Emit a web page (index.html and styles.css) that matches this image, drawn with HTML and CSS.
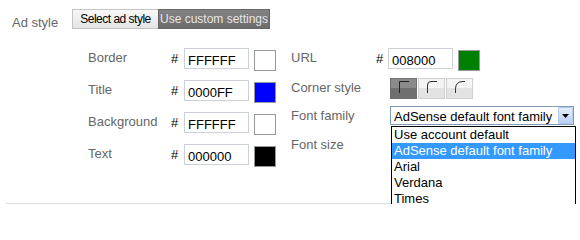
FILE: index.html
```html
<!DOCTYPE html>
<html>
<head>
<meta charset="utf-8">
<link rel="stylesheet" href="styles.css">
</head>
<body>
<div class="page">
  <div class="section">
    <div class="section-label">Ad style</div>
    <div class="section-body">
      <div class="tabs">
        <div class="tab tab-plain">Select ad style</div>
        <div class="tab tab-active">Use custom settings</div>
      </div>
      <div class="columns">
        <div class="col col-left">
          <div class="row"><span class="label">Border</span><span class="hash">#</span><input class="hex" type="text" value="FFFFFF"><span class="swatch" style="background:#FFFFFF"></span></div>
          <div class="row"><span class="label">Title</span><span class="hash">#</span><input class="hex" type="text" value="0000FF"><span class="swatch" style="background:#0000FF"></span></div>
          <div class="row"><span class="label">Background</span><span class="hash">#</span><input class="hex" type="text" value="FFFFFF"><span class="swatch" style="background:#FFFFFF"></span></div>
          <div class="row"><span class="label">Text</span><span class="hash">#</span><input class="hex" type="text" value="000000"><span class="swatch" style="background:#000000"></span></div>
        </div>
        <div class="col col-right">
          <div class="row"><span class="label label-r">URL</span><span class="hash hash-r">#</span><input class="hex" type="text" value="008000"><span class="swatch" style="background:#008000"></span></div>
          <div class="row"><span class="label label-wide">Corner style</span>
            <div class="corners">
              <div class="corner corner-on"><svg width="12" height="13" viewBox="0 0 12 13"><path d="M1.5 13 V1.5 H11" fill="none" stroke="#222" stroke-width="1"/></svg></div>
              <div class="corner"><svg width="12" height="13" viewBox="0 0 12 13"><path d="M1.5 13 V5 Q1.5 1.5 5 1.5 H11" fill="none" stroke="#333" stroke-width="1"/></svg></div>
              <div class="corner"><svg width="12" height="13" viewBox="0 0 12 13"><path d="M1.5 13 V9 Q1.5 1.5 9 1.5 H11" fill="none" stroke="#333" stroke-width="1"/></svg></div>
            </div>
          </div>
          <div class="row"><span class="label label-wide">Font family</span>
            <div class="select-wrap">
              <div class="select">
                <span class="select-text">AdSense default font family</span>
                <span class="select-arrow"><svg width="7" height="4" viewBox="0 0 7 4"><polygon points="0,0 7,0 3.5,4" fill="#000"/></svg></span>
              </div>
              <ul class="options">
                <li>Use account default</li>
                <li class="option-selected">AdSense default font family</li>
                <li>Arial</li>
                <li>Verdana</li>
                <li>Times</li>
              </ul>
            </div>
          </div>
          <div class="row"><span class="label label-wide">Font size</span></div>
        </div>
      </div>
    </div>
  </div>
  <div class="separator"></div>
</div>
</body>
</html>
```

FILE: styles.css
```css
* { box-sizing: border-box; }

body {
  margin: 0;
  font-family: "Liberation Sans", Arial, sans-serif;
  font-size: 13px;
  color: #000;
  background: #fff;
}

.page {
  padding: 9px 6px 0 6px;
}

.section {
  display: flex;
  padding-left: 6px;
}

.section-label {
  width: 62px;
  padding-top: 6px;
  line-height: 16px;
  color: #666;
}

.section-body {
  display: flex;
  flex-direction: column;
}

.tabs {
  display: flex;
  height: 20px;
}

.tab {
  height: 20px;
  padding-top: 1px;
  line-height: 17px;
  font-size: 12px;
  text-align: center;
  white-space: nowrap;
}

.tab-plain {
  width: 86px;
  border: 1px solid #c4c4c4;
  border-right: none;
  background: linear-gradient(#f8f8f8, #e4e4e4);
  color: #000;
  letter-spacing: -0.5px;
}

.tab-active {
  width: 112px;
  border: 1px solid #666;
  background: linear-gradient(#838383, #6b6b6b);
  color: #e6e6e6;
}

.columns {
  display: flex;
  margin-top: 19px;
  margin-left: 16px;
  gap: 15px;
}

.col-left {
  display: grid;
  grid-auto-rows: 21px;
  row-gap: 11px;
}

.col-right {
  display: grid;
  grid-template-rows: 30px 28px 29px 16px;
}

.row {
  display: flex;
  align-items: flex-start;
}

.label {
  width: 83px;
  padding-top: 2px;
  line-height: 16px;
  color: #666;
  white-space: nowrap;
}

.label-r { width: 85px; }
.label-wide { width: 99px; }

.hash {
  width: 13px;
  padding-top: 3px;
  line-height: 16px;
  color: #000;
}

.hash-r { width: 12px; }

.hex {
  width: 65px;
  height: 21px;
  margin: 0;
  padding: 3px 0 0 3px;
  border: 1px solid #ccd0d8;
  border-radius: 0;
  font-family: "Liberation Sans", Arial, sans-serif;
  font-size: 13px;
  color: #000;
  background: #fff;
  outline: none;
}

.swatch {
  width: 22px;
  height: 21px;
  margin: 2px 0 0 5px;
  border: 1px solid #999;
}

.corners {
  display: flex;
  gap: 1px;
}

.corner {
  width: 27px;
  height: 21px;
  padding: 1px 0 0 7px;
  border: 1px solid #cfcfcf;
  background: linear-gradient(#f4f4f4 45%, #e3e3e3 45%);
}

.corner svg { display: block; }

.corner-on {
  border-color: #6f6f6f;
  background: linear-gradient(#8b8b8b 45%, #6f6f6f 45%);
}

.select-wrap {
  position: relative;
}

.select {
  display: flex;
  width: 184px;
  height: 19px;
  border: 1px solid #7f9db9;
  background: #fff;
}

.select-text {
  flex: 1;
  padding: 2px 0 0 3px;
  line-height: 16px;
  white-space: nowrap;
  color: #000;
}

.select-arrow {
  display: flex;
  align-items: center;
  justify-content: center;
  width: 15px;
  height: 17px;
  border: 1px solid #b3c8ee;
  border-radius: 1px;
  background: linear-gradient(#e6eefd, #bcd0f6);
}

.select-arrow svg { display: block; }

.options {
  position: absolute;
  top: 20px;
  left: 1px;
  z-index: 2;
  width: 185px;
  margin: 0;
  padding: 0;
  list-style: none;
  border: 1px solid #000;
  background: #fff;
}

.options li {
  height: 16px;
  padding-left: 2px;
  line-height: 16px;
  white-space: nowrap;
  color: #000;
}

.options .option-selected {
  background: #3399ff;
  color: #fff;
}

.separator {
  height: 1px;
  margin-top: 38px;
  background: #dcdcdc;
}
```
